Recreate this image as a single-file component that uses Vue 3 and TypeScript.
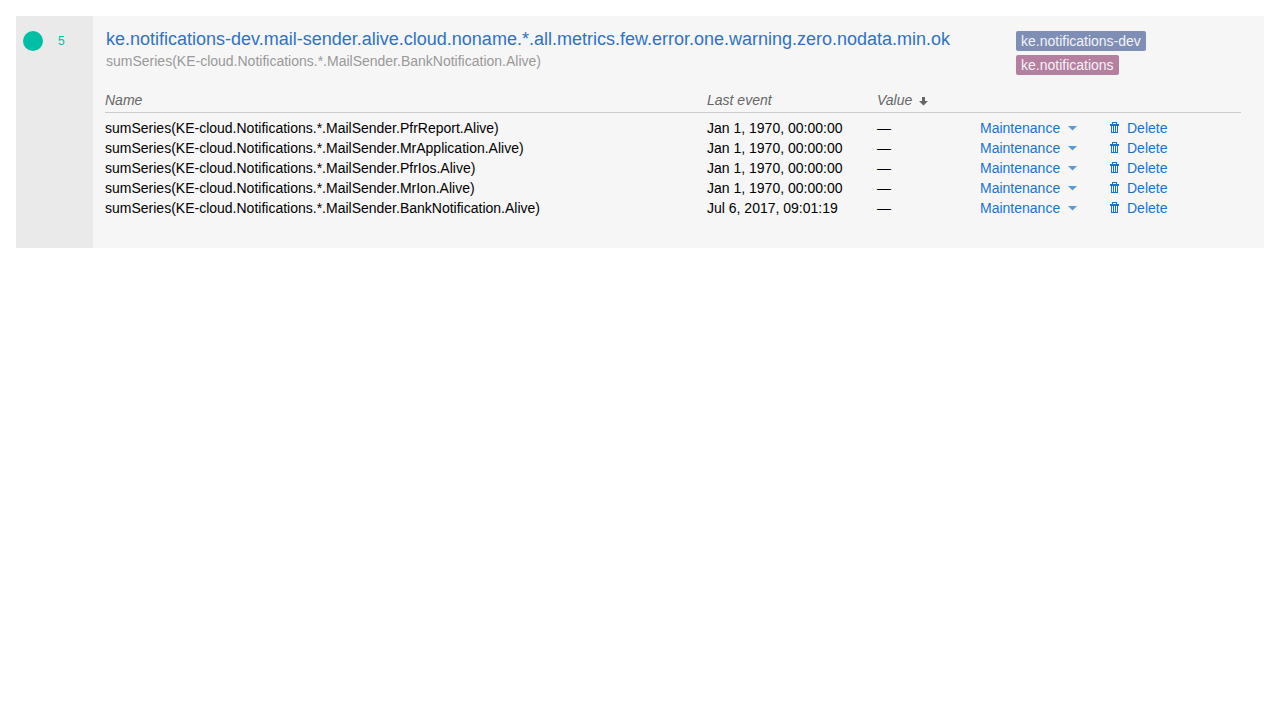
<script setup lang="ts">
import { ref } from 'vue'

interface Metric {
  name: string
  event: string
  value: string
}

const title = 'ke.notifications-dev.mail-sender.alive.cloud.noname.*.all.metrics.few.error.one.warning.zero.nodata.min.ok'
const target = 'sumSeries(KE-cloud.Notifications.*.MailSender.BankNotification.Alive)'

const tags = [
  { label: 'ke.notifications-dev', tone: 'blue' },
  { label: 'ke.notifications', tone: 'pink' },
]

const metrics = ref<Metric[]>([
  { name: 'sumSeries(KE-cloud.Notifications.*.MailSender.PfrReport.Alive)', event: 'Jan 1, 1970, 00:00:00', value: '—' },
  { name: 'sumSeries(KE-cloud.Notifications.*.MailSender.MrApplication.Alive)', event: 'Jan 1, 1970, 00:00:00', value: '—' },
  { name: 'sumSeries(KE-cloud.Notifications.*.MailSender.PfrIos.Alive)', event: 'Jan 1, 1970, 00:00:00', value: '—' },
  { name: 'sumSeries(KE-cloud.Notifications.*.MailSender.MrIon.Alive)', event: 'Jan 1, 1970, 00:00:00', value: '—' },
  { name: 'sumSeries(KE-cloud.Notifications.*.MailSender.BankNotification.Alive)', event: 'Jul 6, 2017, 09:01:19', value: '—' },
])

function remove(name: string): void {
  metrics.value = metrics.value.filter((m) => m.name !== name)
}
</script>

<template>
  <main class="page">
    <article class="card">
      <aside class="state">
        <span class="dot"></span>
        <span class="count">{{ metrics.length }}</span>
      </aside>
      <div class="data">
        <header class="header">
          <div class="heading">
            <a class="title" href="#trigger">{{ title }}</a>
            <div class="target">{{ target }}</div>
          </div>
          <div class="tags">
            <span v-for="tag in tags" :key="tag.label" class="tag" :class="tag.tone">{{ tag.label }}</span>
          </div>
        </header>
        <table class="metrics">
          <colgroup>
            <col />
            <col class="col-event" />
            <col class="col-value" />
            <col class="col-maintenance" />
            <col class="col-delete" />
          </colgroup>
          <thead>
            <tr>
              <th><button type="button" class="sort">Name</button></th>
              <th><button type="button" class="sort">Last event</button></th>
              <th>
                <button type="button" class="sort">
                  Value
                  <svg class="arrow" width="9" height="9" viewBox="0 0 9 9" aria-hidden="true">
                    <path d="M3 0h3v4h3L4.500 8.500 0 4h3z" />
                  </svg>
                </button>
              </th>
              <td></td>
              <td></td>
            </tr>
          </thead>
          <tbody>
            <tr v-for="metric in metrics" :key="metric.name">
              <td>{{ metric.name }}</td>
              <td>{{ metric.event }}</td>
              <td>{{ metric.value }}</td>
              <td>
                <button type="button" class="action" aria-haspopup="menu">
                  Maintenance
                  <svg class="caret" width="9" height="5" viewBox="0 0 9 5" aria-hidden="true">
                    <path d="M0 0h9L4.500 4.500z" />
                  </svg>
                </button>
              </td>
              <td>
                <button type="button" class="action" @click="remove(metric.name)">
                  <svg class="trash" width="9" height="12" viewBox="0 0 9 12" aria-hidden="true">
                    <path
                      fill-rule="evenodd"
                      d="M2 0h5v2h2v2H8v7H1V4H0V2h2zM3 1v1h3V1zM2 4v6h1V4zM4 4v6h1V4zM6 4v6h1V4z"
                    />
                  </svg>
                  Delete
                </button>
              </td>
            </tr>
          </tbody>
        </table>
      </div>
    </article>
  </main>
</template>

<style>
body {
  background: #fff;
}
</style>

<style scoped>
.page {
  padding: 16px;
  font: 14px/20px "Liberation Sans", Arial, sans-serif;
  color: #000;
}
.card {
  display: flex;
  background: #f6f6f6;
}
.state {
  flex: none;
  box-sizing: border-box;
  width: 77px;
  padding: 15px 7px;
  display: flex;
  align-items: flex-start;
  gap: 15px;
  background: #eaeaea;
}
.dot {
  width: 20px;
  height: 20px;
  border-radius: 50%;
  background: #00bfa5;
}
.count {
  font-size: 12px;
  color: #00bfa5;
}
.data {
  flex: 1;
  min-width: 0;
  padding: 11px 23px 30px 12px;
}
.header {
  display: flex;
  min-height: 63px;
  padding-left: 1px;
}
.heading {
  flex: 1;
  min-width: 0;
}
.title {
  display: block;
  font-size: 18px;
  line-height: 24px;
  color: #3072c4;
  text-decoration: none;
}
.target {
  color: #999;
}
.tags {
  flex: none;
  box-sizing: border-box;
  width: 225px;
  padding-top: 4px;
  display: flex;
  flex-direction: column;
  align-items: flex-start;
  gap: 4px;
}
.tag {
  padding: 0 5px;
  border-radius: 2px;
  color: #f3f3f8;
}
.blue {
  background: #7f8eb5;
}
.pink {
  background: #b5809f;
}
.metrics {
  width: 100%;
  table-layout: fixed;
  border-spacing: 0;
}
.col-event {
  width: 170px;
}
.col-value {
  width: 103px;
}
.col-maintenance {
  width: 130px;
}
.col-delete {
  width: 131px;
}
th,
td {
  height: 20px;
  padding: 0;
  text-align: left;
  vertical-align: top;
  white-space: nowrap;
}
thead th,
thead td {
  padding-bottom: 2px;
  border-bottom: 1px solid #ccc;
}
tbody tr:first-child td {
  padding-top: 5px;
}
button {
  display: flex;
  align-items: center;
  padding: 0;
  border: 0;
  background: none;
  font: inherit;
  cursor: pointer;
}
.sort {
  font-weight: 400;
  font-style: italic;
  color: #666;
}
.action {
  color: #1874cf;
}
svg {
  fill: currentColor;
}
.arrow {
  margin: 2px 0 0 7px;
}
.caret {
  margin-left: 8px;
  opacity: 0.7;
}
.trash {
  margin-right: 8px;
}
</style>
